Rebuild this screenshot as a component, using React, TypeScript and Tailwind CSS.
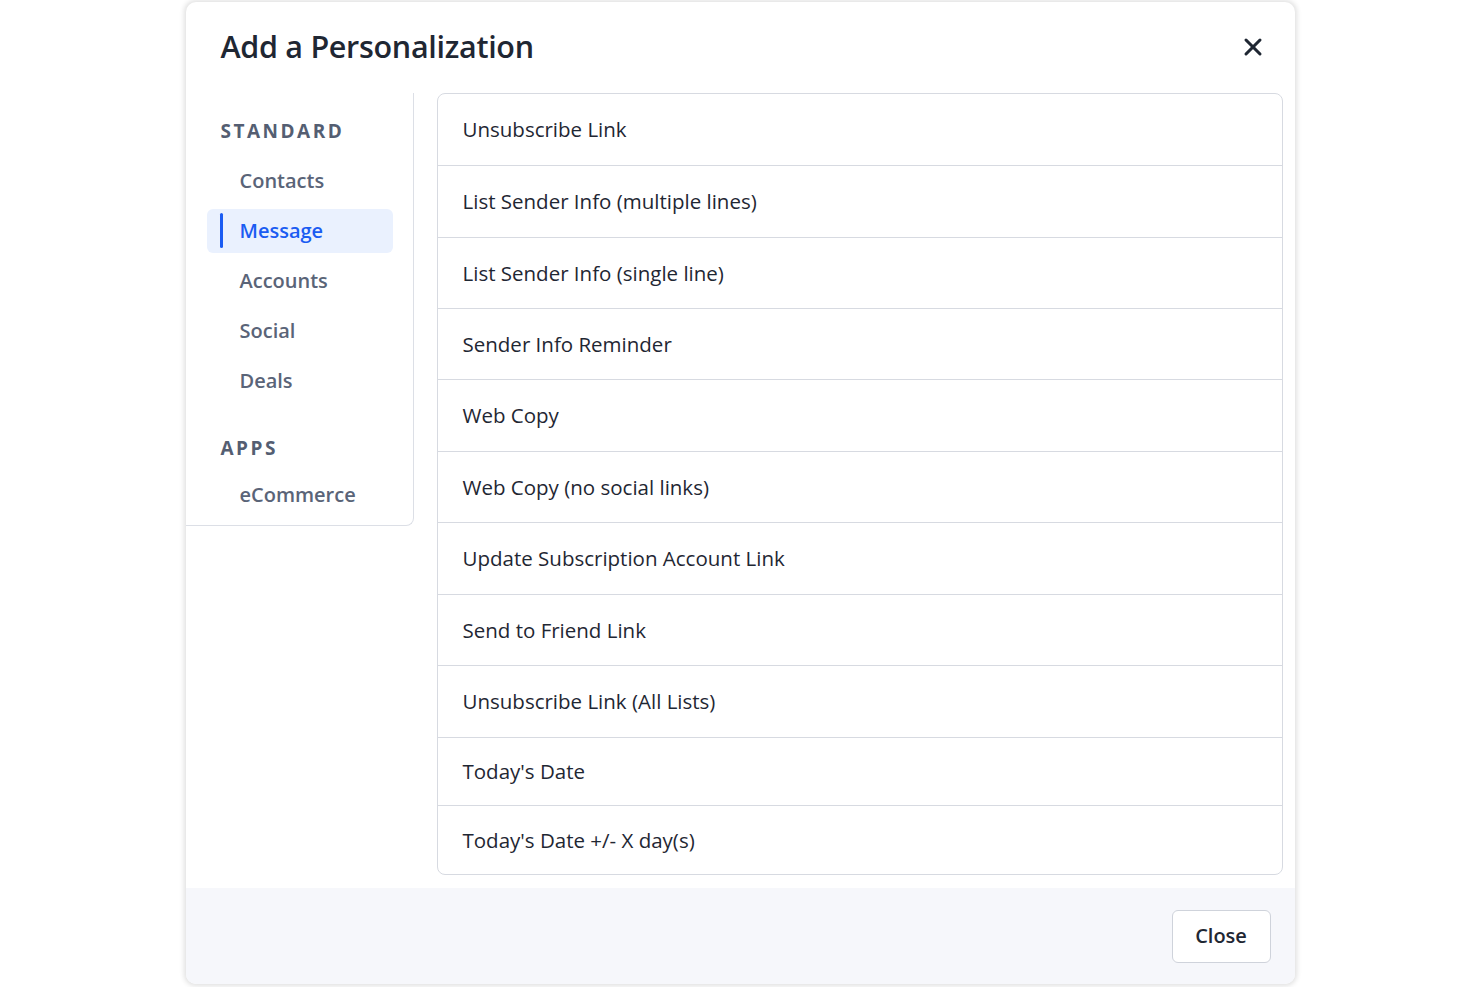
import { X } from "lucide-react";

const standard = ["Contacts", "Message", "Accounts", "Social", "Deals"];

const items = [
  { label: "Unsubscribe Link", h: "h-[71px]" },
  { label: "List Sender Info (multiple lines)", h: "h-[72px]" },
  { label: "List Sender Info (single line)", h: "h-[71px]" },
  { label: "Sender Info Reminder", h: "h-[71px]" },
  { label: "Web Copy", h: "h-[72px]" },
  { label: "Web Copy (no social links)", h: "h-[71px]" },
  { label: "Update Subscription Account Link", h: "h-[72px]" },
  { label: "Send to Friend Link", h: "h-[71px]" },
  { label: "Unsubscribe Link (All Lists)", h: "h-[72px]" },
  { label: "Today's Date", h: "h-[68px]" },
  { label: "Today's Date +/- X day(s)", h: "h-[69px]" },
];

function NavItem({ label }: { label: string }) {
  return (
    <div className="flex h-[44px] items-center pl-[54px] text-[20px] font-semibold text-[#5a6478]">
      {label}
    </div>
  );
}

export default function App() {
  return (
    <div
      className="min-h-[987px] bg-white pt-[2px]"
      style={{ fontFamily: '"Open Sans", "Noto Sans", sans-serif' }}
    >
      <div className="mx-auto flex h-[982px] w-[1109px] flex-col overflow-hidden rounded-[10px] bg-white shadow-[0_0_5px_2px_rgba(0,0,0,0.12)]">
        {/* Header */}
        <div className="flex h-[91px] shrink-0 items-center justify-between pl-[35px] pr-[28px]">
          <h2 className="-mt-[2px] text-[30.5px] font-semibold tracking-[-0.3px] text-[#1f2733]">
            Add a Personalization
          </h2>
          <button className="-mt-[2px] text-[#1f2733]">
            <X className="h-[28px] w-[28px]" strokeWidth={2.6} />
          </button>
        </div>

        {/* Body */}
        <div className="flex flex-1 items-start">
          <aside className="w-[228px] shrink-0 rounded-br-lg border-r border-b border-[#dcdfe6] pt-[24px] pb-[8px]">
            <div className="pl-[35px] text-[19px] font-bold tracking-[2.5px] text-[#545e72]">
              STANDARD
            </div>
            <div className="mt-[13px] flex flex-col gap-[6px]">
              <NavItem label="Contacts" />
              <div className="ml-[21px] flex h-[44px] w-[186px] items-center rounded-md bg-[#eaf1fe]">
                <div className="ml-[13px] h-[35px] w-[3px] rounded-sm bg-[#1b5cf2]" />
                <span className="ml-[17px] text-[20px] font-semibold text-[#1b5cf2]">
                  Message
                </span>
              </div>
              {standard.slice(2).map((s) => (
                <NavItem key={s} label={s} />
              ))}
            </div>
            <div className="mt-[31px] pl-[35px] text-[19px] font-bold tracking-[2.5px] text-[#545e72]">
              APPS
            </div>
            <div className="mt-[11px]">
              <NavItem label="eCommerce" />
            </div>
          </aside>

          <div className="ml-[23px] mr-[12px] flex-1 overflow-hidden rounded-lg border border-[#d7dae1]">
            {items.map((it, i) => (
              <div
                key={it.label}
                className={`flex items-center pl-[25px] text-[20.5px] text-[#1f2733] ${it.h} ${
                  i > 0 ? "border-t border-[#d7dae1]" : ""
                }`}
              >
                {it.label}
              </div>
            ))}
          </div>
        </div>

        {/* Footer */}
        <div className="mt-[13px] flex h-[96px] shrink-0 items-center justify-end bg-[#f6f7fb] pr-[24px]">
          <button className="h-[53px] w-[99px] rounded-md border border-[#cfd3db] bg-white text-[20px] font-semibold text-[#1f2733]">
            Close
          </button>
        </div>
      </div>
    </div>
  );
}
